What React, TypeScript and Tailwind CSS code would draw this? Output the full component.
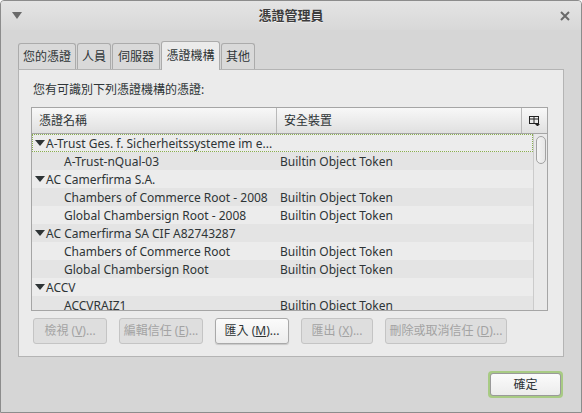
import React from "react";

const FONT = { fontFamily: '"Noto Sans", "Noto Sans CJK TC", sans-serif' };

type Row = { name: string; token?: string; group?: boolean };

const rows: Row[] = [
  { name: "A-Trust Ges. f. Sicherheitssysteme im e...", group: true },
  { name: "A-Trust-nQual-03", token: "Builtin Object Token" },
  { name: "AC Camerfirma S.A.", group: true },
  { name: "Chambers of Commerce Root - 2008", token: "Builtin Object Token" },
  { name: "Global Chambersign Root - 2008", token: "Builtin Object Token" },
  { name: "AC Camerfirma SA CIF A82743287", group: true },
  { name: "Chambers of Commerce Root", token: "Builtin Object Token" },
  { name: "Global Chambersign Root", token: "Builtin Object Token" },
  { name: "ACCV", group: true },
  { name: "ACCVRAIZ1", token: "Builtin Object Token" },
];

const tabs = [
  { t: "您的憑證", w: "w-[58px]" },
  { t: "人員", w: "w-[34px]" },
  { t: "伺服器", w: "w-[48px]" },
  { t: "憑證機構", w: "w-[59px]", active: true },
  { t: "其他", w: "w-[34px]" },
];

function Tri() {
  return (
    <svg width="10" height="7" viewBox="0 0 10 7" className="shrink-0">
      <path d="M0 0 L10 0 L5 6 Z" fill="#2e3436" />
    </svg>
  );
}

function Btn({ label, k, rest, disabled, w }: { label: string; k: string; rest: string; disabled?: boolean; w: string }) {
  return (
    <div
      className={
        "h-[26px] rounded-[3px] border flex items-center justify-center text-[12px] whitespace-nowrap " +
        w +
        (disabled
          ? " border-[#c4c4c4] bg-[#dedede] text-[#a3a3a3]"
          : " border-[#a9a9a9] bg-gradient-to-b from-[#fbfbfb] to-[#ececec] text-[#2e3436] shadow-[0_1px_1px_rgba(0,0,0,0.15)]")
      }
    >
      {label} (<span className="underline">{k}</span>){rest}
    </div>
  );
}

export default function App() {
  return (
    <div style={FONT} className="w-[582px] h-[413px] bg-[#d6d6d6] border border-[#8c8c8c] rounded-t-[4px] flex flex-col overflow-hidden">
      {/* 標題列 */}
      <div className="h-[29px] flex items-center justify-between px-[11px] bg-gradient-to-b from-[#e4e4e4] to-[#d8d8d8] shrink-0">
        <svg width="10" height="7" viewBox="0 0 10 7">
          <path d="M0 0 L10 0 L5 7 Z" fill="#6a6a6a" />
        </svg>
        <div className="text-[13px] font-bold text-[#3c3c3c] [text-shadow:0_1px_0_rgba(255,255,255,0.6)]">憑證管理員</div>
        <svg width="10" height="10" viewBox="0 0 10 10">
          <path d="M1 1 L9 9 M9 1 L1 9" stroke="#6a6a6a" strokeWidth="2" />
        </svg>
      </div>

      <div className="px-[17px] pt-[10px] flex flex-col">
        {/* 分頁 */}
        <div className="flex items-end gap-[1px] h-[29px] text-[12px] text-[#2e3436]">
          {tabs.map((x) =>
            x.active ? (
              <div
                key={x.t}
                className={"relative top-[1px] h-[29px] flex items-center justify-center whitespace-nowrap border border-b-0 border-[#ababab] rounded-t-[3px] bg-[#ebebeb] z-10 " + x.w}
              >
                {x.t}
              </div>
            ) : (
              <div
                key={x.t}
                className={"h-[26px] flex items-center justify-center whitespace-nowrap border border-b-0 border-[#ababab] rounded-t-[3px] bg-[#d9d9d9] " + x.w}
              >
                {x.t}
              </div>
            )
          )}
        </div>

        {/* 面板 */}
        <div className="h-[288px] border border-[#b4b4b4] bg-[#ebebeb] px-[12px] pt-[11px]">
          <div className="ml-[2px] text-[12px] text-[#2e3436] h-[18px] leading-[18px]">您有可識別下列憑證機構的憑證:</div>

          <div className="mt-[8px] w-[517px] h-[204px] border border-[#a5a5a5] flex flex-col bg-[#ebebeb]">
            <div className="h-[26px] flex border-b border-[#a5a5a5] bg-gradient-to-b from-[#f8f8f8] to-[#e0e0e0] text-[12px] text-[#2e3436] shrink-0">
              <div className="w-[245px] pl-[7px] flex items-center border-r border-[#b9b9b9]">憑證名稱</div>
              <div className="w-[245px] pl-[7px] flex items-center border-r border-[#b9b9b9]">安全裝置</div>
              <div className="flex-1 flex items-center justify-center">
                <svg width="11" height="10" viewBox="0 0 11 10">
                  <rect x="0.5" y="0.5" width="9" height="7" fill="none" stroke="#222" />
                  <path d="M0.5 3 H9.5 M5 0.5 V7.5" stroke="#222" />
                  <path d="M6 8 L11 8 L8.5 10.5 Z" fill="#222" />
                </svg>
              </div>
            </div>
            <div className="flex flex-1 min-h-0 overflow-hidden">
              <div className="flex-1 overflow-hidden text-[12px] text-[#2e3436]">
                {rows.map((r, i) => (
                  <div
                    key={i}
                    className={
                      "h-[18px] pt-[1px] flex items-center shrink-0 " +
                      (i % 2 === 1 ? "bg-[#e4e4e4]" : "bg-[#ececec]") +
                      (i === 0 ? " outline outline-1 outline-dotted outline-[#8ab04e] -outline-offset-1" : "")
                    }
                  >
                    {r.group ? (
                      <div className="pl-[3px] flex items-center whitespace-nowrap">
                        <Tri />
                        <span className="ml-[1px]">{r.name}</span>
                      </div>
                    ) : (
                      <>
                        <div className="w-[245px] pl-[32px] whitespace-nowrap overflow-hidden">{r.name}</div>
                        <div className="pl-[3px] whitespace-nowrap">{r.token}</div>
                      </>
                    )}
                  </div>
                ))}
              </div>
              <div className="w-[14px] border-l border-[#cbcbcb] bg-[#e9e9e9] flex justify-center pt-[2px]">
                <div className="w-[10px] h-[28px] rounded-full border border-[#a2a2a2] bg-gradient-to-r from-[#f4f4f4] to-[#e6e6e6]" />
              </div>
            </div>
          </div>

          {/* 按鈕 */}
          <div className="mt-[7px] ml-[2px] flex gap-[12px]">
            <Btn label="檢視" k="V" rest="..." disabled w="w-[74px]" />
            <Btn label="編輯信任" k="E" rest="..." disabled w="w-[84px]" />
            <Btn label="匯入" k="M" rest="..." w="w-[74px]" />
            <Btn label="匯出" k="X" rest="..." disabled w="w-[72px]" />
            <Btn label="刪除或取消信任" k="D" rest="..." disabled w="w-[122px]" />
          </div>
        </div>

        <div className="flex justify-end mt-[14px] mr-[1px]">
          <div className="w-[75px] h-[27px] rounded-[4px] bg-[#a8cb84] p-[2px]">
            <div className="w-full h-full rounded-[3px] border border-[#9a9a9a] bg-gradient-to-b from-[#fbfbfb] to-[#ececec] flex items-center justify-center text-[12px] text-[#2e3436]">
              確定
            </div>
          </div>
        </div>
      </div>
    </div>
  );
}
